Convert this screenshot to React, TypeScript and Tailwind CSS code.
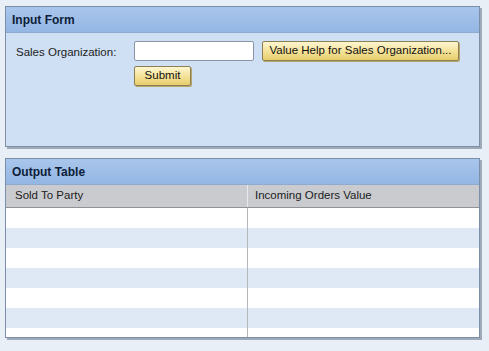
import React from "react";

const FONT = { fontFamily: "'Liberation Sans', Arial, sans-serif" };

function Panel({ title, className = "", children }: { title: string; className?: string; children: React.ReactNode }) {
  return (
    <div className={"flex flex-col border border-[#7d8fa8] bg-[#cfe0f4] shadow-[2px_2px_0_#9eaab8] " + className}>
      <div className="flex h-[26px] shrink-0 items-center border-b border-[#8eaad0] bg-gradient-to-b from-[#a9c6ec] to-[#93b6e3] px-[6px] pt-[1px] text-[12px] font-bold text-[#0d1d38]">
        {title}
      </div>
      {children}
    </div>
  );
}

function YellowButton({ children, className = "" }: { children: React.ReactNode; className?: string }) {
  return (
    <button className={"h-[20px] rounded-[2px] border border-[#8c7f55] bg-gradient-to-b from-[#fdf6cf] via-[#f5e39a] to-[#e6cd6c] text-[11.5px] text-[#111] shadow-[1px_1px_0_#b9a66a] " + className}>
      {children}
    </button>
  );
}

export default function App() {
  const rows = [0, 1, 2, 3, 4, 5, 6];
  return (
    <div className="h-[351px] w-[489px] overflow-hidden bg-[#e9eff6] pl-[5px] pt-[6px]" style={FONT}>
      <Panel title="Input Form" className="h-[141px] w-[475px]">
        <div className="flex gap-[24px] pl-[10px] pt-[8px]">
          <div className="w-[94px] whitespace-nowrap pt-[3px] text-[11.5px] text-[#222]">Sales Organization:</div>
          <div className="flex flex-col gap-[5px]">
            <div className="flex gap-[8px]">
              <div className="h-[20px] w-[120px] rounded-[2px] border border-[#8a96a6] bg-white" />
              <YellowButton className="w-[197px]">Value Help for Sales Organization...</YellowButton>
            </div>
            <YellowButton className="w-[57px]">Submit</YellowButton>
          </div>
        </div>
      </Panel>
      <Panel title="Output Table" className="mt-[11px] h-[180px] w-[475px]">
        <div className="flex min-h-0 flex-1 flex-col overflow-hidden bg-white">
          <div className="flex h-[23px] shrink-0 border-b border-[#8f9396] bg-[#c9cbce] text-[11.5px] text-[#222]">
            <div className="flex w-[242px] items-center border-r border-[#e8e8e8] pl-[9px]">Sold To Party</div>
            <div className="flex flex-1 items-center pl-[7px]">Incoming Orders Value</div>
          </div>
          {rows.map((r) => (
            <div key={r} className={"flex h-[20px] shrink-0 " + (r % 2 === 1 ? "bg-[#dfe9f5]" : "bg-white")}>
              <div className="w-[242px] border-r border-[#b4b8bc]" />
              <div className="flex-1" />
            </div>
          ))}
        </div>
      </Panel>
    </div>
  );
}
